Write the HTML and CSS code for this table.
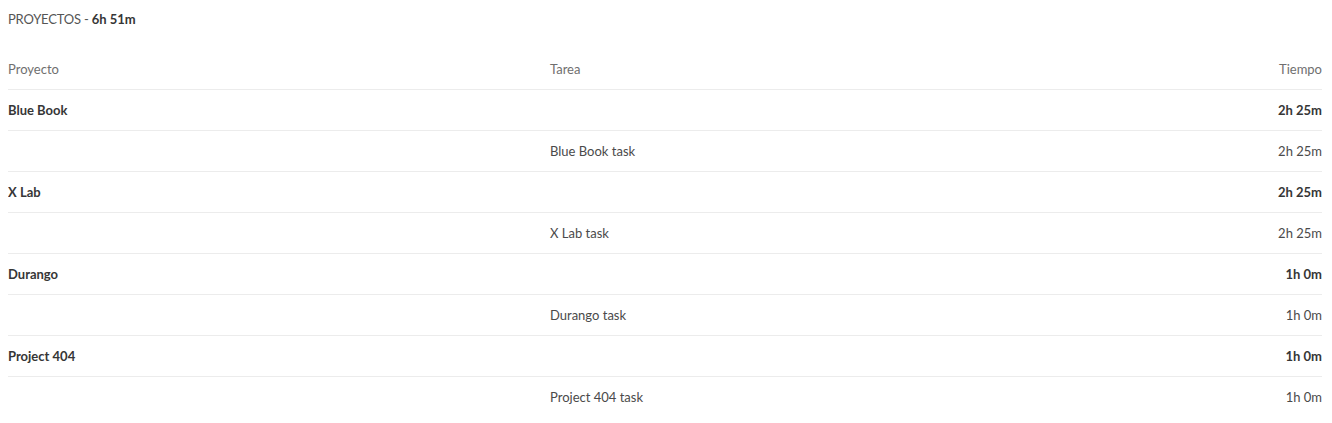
FILE: index.html
```html
<!DOCTYPE html>
<html lang="es">
<head>
<meta charset="utf-8">
<title>Proyectos</title>
<link rel="stylesheet" href="styles.css">
</head>
<body>
<div class="summary">PROYECTOS - <strong>6h 51m</strong></div>
<table class="report">
  <thead>
    <tr><th class="c-proj">Proyecto</th><th class="c-task">Tarea</th><th class="c-time">Tiempo</th></tr>
  </thead>
  <tbody>
    <tr class="proj"><td>Blue Book</td><td></td><td class="c-time">2h 25m</td></tr>
    <tr class="task"><td></td><td>Blue Book task</td><td class="c-time">2h 25m</td></tr>
    <tr class="proj"><td>X Lab</td><td></td><td class="c-time">2h 25m</td></tr>
    <tr class="task"><td></td><td>X Lab task</td><td class="c-time">2h 25m</td></tr>
    <tr class="proj"><td>Durango</td><td></td><td class="c-time">1h 0m</td></tr>
    <tr class="task"><td></td><td>Durango task</td><td class="c-time">1h 0m</td></tr>
    <tr class="proj"><td>Project 404</td><td></td><td class="c-time">1h 0m</td></tr>
    <tr class="task last"><td></td><td>Project 404 task</td><td class="c-time">1h 0m</td></tr>
  </tbody>
</table>
</body>
</html>
```
FILE: styles.css
```css
html, body { background: #fff; }
body {
  margin: 8px 10px 8px 8px;
  font-family: "Lato", "Noto Sans", sans-serif;
  font-size: 13px;
  color: #4a4a4a;
}
.summary {
  line-height: 22px;
  color: #555;
  margin-bottom: 19px;
  letter-spacing: -0.2px;
}
.summary strong { color: #363636; font-weight: 700; letter-spacing: 0; }
.report {
  width: 100%;
  border-collapse: collapse;
}
.report th, .report td {
  height: 40px;
  padding: 0;
  text-align: left;
  vertical-align: middle;
  border-bottom: 1px solid #ececec;
}
.report th { font-weight: 400; color: #6f6f6f; }
.c-proj { width: 542px; }
.report .c-time { text-align: right; }
.proj td { font-weight: 700; color: #363636; }
.task td { color: #4a4a4a; }
.task.last td { border-bottom: none; }
```
